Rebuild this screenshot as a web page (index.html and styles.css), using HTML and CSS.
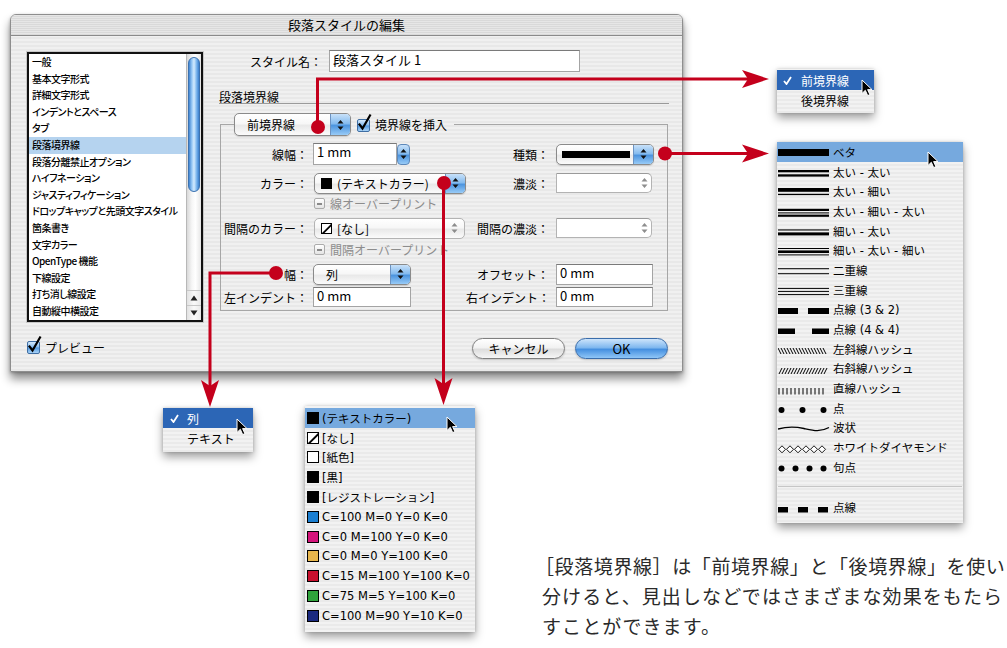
FILE: index.html
```html
<!DOCTYPE html>
<html lang="ja">
<head>
<meta charset="utf-8">
<title>段落スタイルの編集</title>
<link rel="stylesheet" href="styles.css">
</head>
<body>
<div class="canvas">

  <section class="dialog">
    <header class="titlebar">段落スタイルの編集</header>
    <div class="dlg-body">
      <div class="list">
        <ul class="items">
          <li>一般</li>
          <li>基本文字形式</li>
          <li>詳細文字形式</li>
          <li>インデントとスペース</li>
          <li>タブ</li>
          <li class="sel">段落境界線</li>
          <li>段落分離禁止オプション</li>
          <li>ハイフネーション</li>
          <li>ジャスティフィケーション</li>
          <li>ドロップキャップと先頭文字スタイル</li>
          <li>箇条書き</li>
          <li>文字カラー</li>
          <li>OpenType 機能</li>
          <li>下線設定</li>
          <li>打ち消し線設定</li>
          <li>自動縦中横設定</li>
        </ul>
        <div class="scrollbar">
          <div class="track"><div class="thumb"></div></div>
          <div class="sarrow"><svg width="8" height="6" viewBox="0 0 8 6"><path d="M4 0.5L7.5 5.5H0.5Z"/></svg></div>
          <div class="sarrow"><svg width="8" height="6" viewBox="0 0 8 6"><path d="M4 5.5L7.5 0.5H0.5Z"/></svg></div>
        </div>
      </div>

      <div class="form">
        <div class="namerow">
          <span class="namelbl">スタイル名：</span>
          <div class="field namefield">段落スタイル 1</div>
        </div>
        <h2 class="heading">段落境界線</h2>
        <fieldset class="group">
          <legend class="legend">
            <div class="popup pp-rule"><span class="val">前境界線</span><span class="arr"><svg width="7" height="12" viewBox="0 0 7 12"><path d="M3.5 1L6.5 4.6H0.5Z M3.5 11L6.5 7.4H0.5Z"/></svg></span></div>
            <span class="cb"><svg width="16" height="18" viewBox="0 0 16 18"><path d="M2.5 10.5L5.5 14.5L13 1.5"/></svg></span>
            <span class="cbtext">境界線を挿入</span>
          </legend>

          <div class="frow r1">
            <span class="lbl1">線幅：</span>
            <div class="combo">
              <div class="field w84">1 mm</div>
              <div class="stepper"><svg width="7" height="12" viewBox="0 0 7 12"><path d="M3.5 1L6.5 4.6H0.5Z M3.5 11L6.5 7.4H0.5Z"/></svg></div>
            </div>
            <span class="lbl2">種類：</span>
            <div class="popup pp-type"><span class="val"><i class="solidbar"></i></span><span class="arr"><svg width="7" height="12" viewBox="0 0 7 12"><path d="M3.5 1L6.5 4.6H0.5Z M3.5 11L6.5 7.4H0.5Z"/></svg></span></div>
          </div>

          <div class="frow r2">
            <span class="lbl1">カラー：</span>
            <div class="popup pp-color"><span class="val"><i class="sw sw-black"></i>(テキストカラー)</span><span class="arr"><svg width="7" height="12" viewBox="0 0 7 12"><path d="M3.5 1L6.5 4.6H0.5Z M3.5 11L6.5 7.4H0.5Z"/></svg></span></div>
            <span class="lbl2">濃淡：</span>
            <div class="spinfield w96"><svg width="7" height="12" viewBox="0 0 7 12"><path d="M3.5 1L6.5 4.6H0.5Z M3.5 11L6.5 7.4H0.5Z"/></svg></div>
          </div>

          <div class="frow r3">
            <span></span>
            <div class="opt"><span class="cbm"></span><span class="dimtext">線オーバープリント</span></div>
          </div>

          <div class="frow r4">
            <span class="lbl1">間隔のカラー：</span>
            <div class="popup pp-color dis"><span class="val"><svg class="sw-none" width="11" height="11" viewBox="0 0 11 11"><rect x="0.5" y="0.5" width="10" height="10" fill="#fff" stroke="#000"/><path d="M0.5 10.5L10.5 0.5L10.5 3L3 10.5Z" fill="#000"/></svg>[なし]</span><span class="arr"><svg width="7" height="12" viewBox="0 0 7 12"><path d="M3.5 1L6.5 4.6H0.5Z M3.5 11L6.5 7.4H0.5Z"/></svg></span></div>
            <span class="lbl2">間隔の濃淡：</span>
            <div class="spinfield w96"><svg width="7" height="12" viewBox="0 0 7 12"><path d="M3.5 1L6.5 4.6H0.5Z M3.5 11L6.5 7.4H0.5Z"/></svg></div>
          </div>

          <div class="frow r5">
            <span></span>
            <div class="opt"><span class="cbm"></span><span class="dimtext">間隔オーバープリント</span></div>
          </div>

          <div class="frow r6">
            <span class="lbl1">幅：</span>
            <div class="popup pp-width"><span class="val">列</span><span class="arr"><svg width="7" height="12" viewBox="0 0 7 12"><path d="M3.5 1L6.5 4.6H0.5Z M3.5 11L6.5 7.4H0.5Z"/></svg></span></div>
            <span class="lbl2">オフセット：</span>
            <div class="field w97 h21">0 mm</div>
          </div>

          <div class="frow r7">
            <span class="lbl1">左インデント：</span>
            <div class="field w98 h20">0 mm</div>
            <span class="lbl2">右インデント：</span>
            <div class="field w97 h20">0 mm</div>
          </div>
        </fieldset>
      </div>

      <label class="preview"><span class="cb"><svg width="16" height="18" viewBox="0 0 16 18"><path d="M2.5 10.5L5.5 14.5L13 1.5"/></svg></span><span class="pvtext">プレビュー</span></label>
      <div class="buttons">
        <button class="btn">キャンセル</button>
        <button class="btn ok">OK</button>
      </div>
    </div>
  </section>

  <!-- 前境界線 / 後境界線 menu -->
  <div class="menu m-edge">
    <div class="mi hl-dark"><span class="chk"><svg width="9" height="9" viewBox="0 0 9 9"><path d="M1 5L3.5 8L8 1"/></svg></span>前境界線</div>
    <div class="mi"><span class="chk"></span>後境界線</div>
    <svg class="cursor c-edge" width="12" height="18" viewBox="0 0 12 18"><path d="M1 1L1 14.5L4.3 11.3L6.7 16.6L8.9 15.6L6.6 10.6L11 10.6Z"/></svg>
  </div>

  <!-- 種類 menu -->
  <div class="menu m-type">
    <div class="ti hl-light"><svg class="smp" width="52" height="20" viewBox="0 0 52 20"><rect x="0" y="7" width="51" height="7"/></svg>ベタ</div>
    <div class="ti"><svg class="smp" width="52" height="20" viewBox="0 0 52 20"><rect x="0" y="8" width="51" height="2.3"/><rect x="0" y="12.3" width="51" height="2.3"/></svg>太い - 太い</div>
    <div class="ti"><svg class="smp" width="52" height="20" viewBox="0 0 52 20"><rect x="0" y="7" width="51" height="3.8"/><rect x="0" y="12.8" width="51" height="1.3"/></svg>太い - 細い</div>
    <div class="ti"><svg class="smp" width="52" height="20" viewBox="0 0 52 20"><rect x="0" y="7.8" width="51" height="2.2"/><rect x="0" y="11.4" width="51" height="1"/><rect x="0" y="13.6" width="51" height="2.2"/></svg>太い - 細い - 太い</div>
    <div class="ti"><svg class="smp" width="52" height="20" viewBox="0 0 52 20"><rect x="0" y="8.4" width="51" height="1.1"/><rect x="0" y="11.4" width="51" height="3"/></svg>細い - 太い</div>
    <div class="ti"><svg class="smp" width="52" height="20" viewBox="0 0 52 20"><rect x="0" y="8" width="51" height="1"/><rect x="0" y="10.4" width="51" height="2.6"/><rect x="0" y="14.4" width="51" height="1"/></svg>細い - 太い - 細い</div>
    <div class="ti"><svg class="smp" width="52" height="20" viewBox="0 0 52 20"><rect x="0" y="8.2" width="51" height="1"/><rect x="0" y="13.2" width="51" height="1"/></svg>二重線</div>
    <div class="ti"><svg class="smp" width="52" height="20" viewBox="0 0 52 20"><rect x="0" y="7.9" width="51" height="1"/><rect x="0" y="10.9" width="51" height="1"/><rect x="0" y="14.1" width="51" height="1"/></svg>三重線</div>
    <div class="ti"><svg class="smp" width="52" height="20" viewBox="0 0 52 20"><rect x="0" y="9" width="20" height="6"/><rect x="30" y="9" width="21" height="6"/></svg>点線 (3 &amp; 2)</div>
    <div class="ti"><svg class="smp" width="52" height="20" viewBox="0 0 52 20"><rect x="0" y="9.5" width="17" height="5.5"/><rect x="34" y="9.5" width="17" height="5.5"/></svg>点線 (4 &amp; 4)</div>
    <div class="ti"><svg class="smp" width="52" height="20" viewBox="0 0 52 20"><path class="hatch" d="M0 9l3 6M3 9l3 6M6 9l3 6M9 9l3 6M12 9l3 6M15 9l3 6M18 9l3 6M21 9l3 6M24 9l3 6M27 9l3 6M30 9l3 6M33 9l3 6M36 9l3 6M39 9l3 6M42 9l3 6M45 9l3 6"/></svg>左斜線ハッシュ</div>
    <div class="ti"><svg class="smp" width="52" height="20" viewBox="0 0 52 20"><path class="hatch" d="M4 10l-3 6M7 10l-3 6M10 10l-3 6M13 10l-3 6M16 10l-3 6M19 10l-3 6M22 10l-3 6M25 10l-3 6M28 10l-3 6M31 10l-3 6M34 10l-3 6M37 10l-3 6M40 10l-3 6M43 10l-3 6M46 10l-3 6M49 10l-3 6"/></svg>右斜線ハッシュ</div>
    <div class="ti"><svg class="smp" width="52" height="20" viewBox="0 0 52 20"><path class="hatch" d="M1 10v6.5M5 10v6.5M9 10v6.5M13 10v6.5M17 10v6.5M21 10v6.5M25 10v6.5M29 10v6.5M33 10v6.5M37 10v6.5M41 10v6.5M45 10v6.5"/></svg>直線ハッシュ</div>
    <div class="ti"><svg class="smp" width="52" height="20" viewBox="0 0 52 20"><circle cx="3.5" cy="12" r="3"/><circle cx="24.5" cy="12" r="3"/><circle cx="45.5" cy="12" r="3"/></svg>点</div>
    <div class="ti"><svg class="smp" width="52" height="20" viewBox="0 0 52 20"><path class="wave" d="M0 12C9 9.5 17 9.5 26 11.5S42 15.5 51 10.5"/></svg>波状</div>
    <div class="ti"><svg class="smp" width="52" height="20" viewBox="0 0 52 20"><path class="dia" d="M0.5 12.3l3.5-3.5 3.5 3.5-3.5 3.5z M8.5 12.3l3.5-3.5 3.5 3.5-3.5 3.5z M16.5 12.3l3.5-3.5 3.5 3.5-3.5 3.5z M24.5 12.3l3.5-3.5 3.5 3.5-3.5 3.5z M32.5 12.3l3.5-3.5 3.5 3.5-3.5 3.5z M40.5 12.3l3.5-3.5 3.5 3.5-3.5 3.5z"/></svg>ホワイトダイヤモンド</div>
    <div class="ti"><svg class="smp" width="52" height="20" viewBox="0 0 52 20"><circle cx="3.5" cy="11.5" r="3"/><circle cx="17.5" cy="11.5" r="3"/><circle cx="31.5" cy="11.5" r="3"/><circle cx="45.5" cy="11.5" r="3"/></svg>句点</div>
    <div class="msep"></div>
    <div class="ti"><svg class="smp" width="52" height="20" viewBox="0 0 52 20"><rect x="0" y="10" width="10" height="5.5"/><rect x="20" y="10" width="10" height="5.5"/><rect x="40" y="10" width="10" height="5.5"/></svg>点線</div>
    <svg class="cursor c-type" width="12" height="18" viewBox="0 0 12 18"><path d="M1 1L1 14.5L4.3 11.3L6.7 16.6L8.9 15.6L6.6 10.6L11 10.6Z"/></svg>
  </div>

  <!-- 列 / テキスト menu -->
  <div class="menu m-width">
    <div class="mi hl-dark"><span class="chk"><svg width="9" height="9" viewBox="0 0 9 9"><path d="M1 5L3.5 8L8 1"/></svg></span>列</div>
    <div class="mi"><span class="chk"></span>テキスト</div>
    <svg class="cursor c-width" width="12" height="18" viewBox="0 0 12 18"><path d="M1 1L1 14.5L4.3 11.3L6.7 16.6L8.9 15.6L6.6 10.6L11 10.6Z"/></svg>
  </div>

  <!-- カラー menu -->
  <div class="menu m-color">
    <div class="ci hl-light"><i class="sw sw-black"></i>(テキストカラー)</div>
    <div class="ci"><svg class="sw-none" width="12" height="12" viewBox="0 0 12 12"><rect x="0.5" y="0.5" width="11" height="11" fill="#fff" stroke="#000"/><path d="M0.5 11.5L11.5 0.5L11.5 3.2L3.2 11.5Z" fill="#000"/></svg>[なし]</div>
    <div class="ci"><i class="sw sw-paper"></i>[紙色]</div>
    <div class="ci"><i class="sw sw-black"></i>[黒]</div>
    <div class="ci"><i class="sw sw-black"></i>[レジストレーション]</div>
    <div class="ci"><i class="sw sw-c"></i>C=100 M=0 Y=0 K=0</div>
    <div class="ci"><i class="sw sw-m"></i>C=0 M=100 Y=0 K=0</div>
    <div class="ci"><i class="sw sw-y"></i>C=0 M=0 Y=100 K=0</div>
    <div class="ci"><i class="sw sw-r"></i>C=15 M=100 Y=100 K=0</div>
    <div class="ci"><i class="sw sw-g"></i>C=75 M=5 Y=100 K=0</div>
    <div class="ci"><i class="sw sw-b"></i>C=100 M=90 Y=10 K=0</div>
    <svg class="cursor c-color" width="12" height="18" viewBox="0 0 12 18"><path d="M1 1L1 14.5L4.3 11.3L6.7 16.6L8.9 15.6L6.6 10.6L11 10.6Z"/></svg>
  </div>

  <!-- red connectors -->
  <svg class="wires" width="1007" height="648" viewBox="0 0 1007 648">
    <g fill="none" stroke="#c4001c" stroke-width="3">
      <path d="M317.5 127V79H748"/>
      <path d="M665 153.5H748"/>
      <path d="M276 273H210V386"/>
      <path d="M443.5 183V384"/>
    </g>
    <g fill="#c4001c">
      <circle cx="318" cy="127" r="7"/>
      <circle cx="665" cy="153.5" r="7"/>
      <circle cx="276" cy="273" r="7"/>
      <circle cx="444" cy="183" r="7"/>
      <path d="M769 79L742 70L748 79L742 88Z"/>
      <path d="M769 153.5L742 144.5L748 153.5L742 162.5Z"/>
      <path d="M210 407L201 380L210 386L219 380Z"/>
      <path d="M443.5 405L434.5 378L443.5 384L452.5 378Z"/>
    </g>
  </svg>

  <p class="caption"><span class="l1">［段落境界線］は「前境界線」と「後境界線」を使い</span><span class="l2">分けると、見出しなどではさまざまな効果をもたら</span><span class="l2">すことができます。</span></p>
</div>
</body>
</html>
```

FILE: styles.css
```css
* { box-sizing: border-box; }
html, body { margin: 0; padding: 0; background: #fff; }
body {
  font-family: "Noto Sans CJK JP", "Noto Sans", sans-serif;
  font-size: 12px;
  color: #000;
}
.canvas { position: relative; width: 1007px; height: 648px; overflow: hidden; background: #fff; }

/* ---------- dialog window ---------- */
.dialog {
  position: absolute; left: 10px; top: 14px;
  width: 673px; height: 358px;
  border: 1px solid #8e8e8e;
  border-radius: 6px 6px 0 0;
  background: repeating-linear-gradient(#f0f0f0 0 2px, #e8e8e8 2px 4px);
  box-shadow: 0 7px 10px rgba(0,0,0,.45), 0 1px 3px rgba(0,0,0,.25);
}
.titlebar {
  height: 21px;
  border-bottom: 1px solid #8a8a8a;
  border-radius: 5px 5px 0 0;
  background: repeating-linear-gradient(#e6e6e6 0 1px, #d9d9d9 1px 2px);
  text-align: center;
  font-size: 13px;
  line-height: 20px;
}
.dlg-body {
  display: grid;
  grid-template-columns: 176px 450px;
  grid-template-rows: 272px 22px;
  column-gap: 16px;
  row-gap: 16px;
  padding: 14px 0 0 16px;
}

/* ---------- category list ---------- */
.list {
  margin-top: 2px; height: 270px;
  display: flex;
  border: 2px solid #111;
  background: #fff;
  box-shadow: 0 0 0 1px #c8c8c8;
}
.items {
  list-style: none; margin: 0; padding: 0;
  flex: 1; overflow: hidden;
  font-size: 10px; line-height: 16.6px; font-weight: 500;
  letter-spacing: -0.5px;
  font-feature-settings: "palt";
}
.items li { padding-left: 3px; white-space: nowrap; }
.items li.sel { background: #b5d3ef; }
.scrollbar {
  width: 15px; display: flex; flex-direction: column;
  border-left: 1px solid #b8b8b8;
}
.track {
  flex: 1; padding: 3px 1px 0 1px;
  background: linear-gradient(90deg, #d9d9d9, #f6f6f6 35%, #ffffff 60%, #e6e6e6);
}
.thumb {
  height: 135px; border-radius: 6px;
  border: 1px solid #3c72b0;
  background: linear-gradient(90deg, #3f84d2, #9ccbf6 30%, #d4ebfe 50%, #7cb6ee 75%, #3a7fcd);
}
.sarrow {
  height: 15px; display: flex; align-items: center; justify-content: center;
  border-top: 1px solid #c8c8c8;
  background: linear-gradient(90deg, #e2e2e2, #fafafa 50%, #e8e8e8);
}
.sarrow svg { fill: #222; }

/* ---------- form ---------- */
.namerow { display: flex; align-items: center; height: 22px; }
.namelbl { width: 110px; text-align: right; padding-right: 7px; font-size: 12px; }
.field {
  height: 22px;
  background: #fff;
  border: 1px solid #a4a4a4;
  border-top-color: #7a7a7a;
  font-size: 13px; line-height: 14px;
  padding: 1px 3px 0;
  white-space: nowrap;
}
.namefield { width: 251px; padding-top: 2px; }
.w84 { width: 84px; }
.w96 { width: 96px; }
.w97 { width: 97px; }
.w98 { width: 98px; }
.h21 { height: 21px; }
.h20 { height: 20px; }

.heading {
  margin: 19px 0 0; padding: 0;
  font-size: 12px; font-weight: normal; line-height: 12px;
  border-bottom: 1px solid #9a9a9a;
}
.group {
  margin: 9px 0 0 1px; padding: 0 0 3px 0;
  width: 448px; min-width: 0;
  border: 1px solid #a6a6a6;
}
.legend {
  margin-left: 13px; padding: 0 7px 0 0;
  display: flex; align-items: center;
  height: 23px;
}
.frow {
  display: grid;
  grid-template-columns: 92px 153px 90px 98px;
  align-items: center;
}
.r1 { height: 22px; margin-top: 7px; }
.r2 { height: 22px; margin-top: 7px; }
.r3 { height: 12px; margin-top: 1px; }
.r4 { height: 22px; margin-top: 10px; }
.r5 { height: 14px; margin-top: 2px; }
.r6 { height: 22px; margin-top: 8px; }
.r7 { height: 20px; margin-top: 2px; }
.lbl1 { text-align: right; padding-right: 5px; white-space: nowrap; }
.lbl2 { text-align: right; padding-right: 7px; white-space: nowrap; }
.combo { display: flex; align-items: center; }

/* aqua popup button */
.popup {
  display: flex; height: 21px;
  border: 1px solid #8a8a8a;
  border-radius: 5px;
  background: linear-gradient(#ffffff, #f7f7f7 45%, #e9e9e9 55%, #fbfbfb);
  box-shadow: 0 1px 1px rgba(0,0,0,.14);
  overflow: hidden;
}
.popup .val {
  flex: 1; display: flex; align-items: center;
  padding-left: 12px; white-space: nowrap; font-size: 12px;
}
.popup .arr {
  width: 20px; display: flex; align-items: center; justify-content: center;
  border-left: 1px solid #6c93c2;
  background: linear-gradient(#c8e1f9, #86bcef 45%, #4d95df 55%, #98cbf7);
}
.popup .arr svg, .stepper svg { fill: #111; }
.pp-rule { width: 117px; height: 23px; }
.pp-type { width: 98px; }
.pp-type .val { padding-left: 5px; }
.solidbar { display: block; width: 68px; height: 7px; background: #000; }
.pp-color { width: 152px; margin-left: 1px; }
.pp-color .val { padding-left: 6px; }
.pp-color .val .sw, .pp-color .val .sw-none { margin-right: 5px; }
.pp-width { width: 98px; }
.popup.dis { width: 151px; border-color: #b3b3b3; box-shadow: none; }
.popup.dis .arr { background: none; border-left: 0; }
.popup.dis .arr svg { fill: #8c8c8c; }

.stepper {
  width: 13px; height: 21px; margin-left: 0;
  border: 1px solid #5d88ba; border-radius: 4px;
  display: flex; align-items: center; justify-content: center;
  background: linear-gradient(#c8e1f9, #86bcef 45%, #4d95df 55%, #98cbf7);
}
.spinfield {
  height: 20px; background: #fff;
  border: 1px solid #b3b3b3; border-top-color: #9a9a9a;
  border-radius: 0 5px 5px 0;
  display: flex; align-items: center; justify-content: flex-end;
  padding-right: 3px;
}
.spinfield svg { fill: #8e8e8e; }

/* checkboxes */
.cb {
  position: relative; display: inline-block;
  width: 13px; height: 13px; flex: none;
  border: 1px solid #3f6ea3; border-radius: 2px;
  background: linear-gradient(#d4e8fb, #86bcef 48%, #5198e0 52%, #a9d3f8);
}
.cb svg {
  position: absolute; left: -1px; top: -6px; overflow: visible;
  fill: none; stroke: #000; stroke-width: 2.2; stroke-linecap: square;
}
.legend .cb { margin-left: 6px; margin-top: 1px; }
.cbtext { margin-left: 5px; font-size: 12px; white-space: nowrap; }
.opt { display: flex; align-items: center; margin-left: 1px; }
.cbm {
  width: 11px; height: 11px; flex: none;
  border: 1px solid #ababab; border-radius: 2px;
  background: linear-gradient(#ffffff, #e4e4e4);
  display: flex; align-items: center; justify-content: center;
}
.cbm::after { content: ""; width: 5px; height: 2px; background: #8a8a8a; }
.dimtext { margin-left: 5px; color: #8d8d8d; white-space: nowrap; }

/* bottom row */
.preview { display: flex; align-items: center; align-self: center; margin-top: -4px; }
.pvtext { margin-left: 5px; font-size: 12px; }
.buttons { display: flex; justify-content: flex-end; gap: 10px; padding-right: 1px; }
.btn {
  width: 93px; height: 21px; padding: 0;
  border: 1px solid #7f7f7f; border-radius: 11px;
  background: linear-gradient(#ffffff, #f2f2f2 45%, #dddddd 55%, #f6f6f6);
  font-family: "Noto Sans CJK JP", "Noto Sans", sans-serif;
  font-size: 12px; line-height: 19px; color: #000;
  box-shadow: 0 1px 2px rgba(0,0,0,.2);
}
.btn.ok {
  border-color: #3a6dab;
  background: linear-gradient(#cde4fb, #80b8ef 45%, #4690e0 55%, #8fc6f7);
  font-size: 13px;
}

/* ---------- pop-up menus ---------- */
.menu {
  position: absolute;
  background: repeating-linear-gradient(#f2f2f2 0 2px, #eaeaea 2px 4px);
  box-shadow: 0 5px 9px rgba(0,0,0,.38), 0 0 3px rgba(0,0,0,.18);
  font-size: 12px;
}
.hl-dark { background: #2c66b6; color: #fff; }
.hl-light { background: #76a9de; }
.mi { display: flex; align-items: center; height: 20px; white-space: nowrap; }
.chk { width: 18px; display: flex; align-items: center; }
.chk svg { fill: none; stroke: #fff; stroke-width: 1.8; }
.m-edge { left: 777px; top: 69px; width: 97px; height: 44px; padding-top: 1px; }
.m-edge .mi { padding-left: 6px; }
.m-width { left: 163px; top: 408px; width: 90px; height: 44px; }
.m-width .mi { padding-left: 7px; }
.m-width .chk { width: 17px; }

.m-type, .m-color {
  font-family: "DejaVu Sans", "Noto Sans CJK JP", sans-serif;
  font-size: 11.5px;
}
.m-type { left: 777px; top: 142px; width: 186px; height: 381px; }
.ti { display: flex; align-items: center; height: 19.7px; white-space: nowrap; }
.smp { flex: none; margin-left: 1px; margin-right: 3px; fill: #000; }
.hatch { stroke: #000; stroke-width: 1; fill: none; }
.wave { stroke: #000; stroke-width: 1.4; fill: none; }
.dia { fill: #fff; stroke: #000; stroke-width: 0.9; }
.msep { height: 20px; display: flex; align-items: center; padding: 0 1px; }
.msep::after { content: ""; flex: 1; height: 1px; background: #c6c6c6; }

.m-color { left: 305px; top: 406px; width: 170px; height: 226px; padding-top: 2px; }
.ci { display: flex; align-items: center; height: 19.8px; padding-left: 2px; white-space: nowrap; }
.ci .sw, .ci .sw-none { margin-right: 3px; }

.sw { display: inline-block; flex: none; width: 12px; height: 12px; border: 1px solid #000; }
.pp-color .sw { width: 11px; height: 11px; }
.sw-none { flex: none; display: block; }
.sw-black { background: #000; }
.sw-paper { background: #fff; }
.sw-c { background: #1b7fd1; }
.sw-m { background: #d4147b; }
.sw-y { background: #e7b64c; }
.sw-r { background: #c8102e; }
.sw-g { background: #2fa33b; }
.sw-b { background: #1b2a80; }

.cursor { position: absolute; fill: #000; stroke: #fff; stroke-width: 1; }
.c-edge { left: 84px; top: 10px; }
.c-type { left: 150px; top: 9px; }
.c-width { left: 73px; top: 10px; }
.c-color { left: 141px; top: 10px; }

/* ---------- connectors & caption ---------- */
.wires { position: absolute; left: 0; top: 0; pointer-events: none; }
.caption {
  position: absolute; left: 542px; top: 551px; margin: 0;
  font-size: 19px; line-height: 30px; color: #2a2a2a;
}
.caption span { display: block; white-space: nowrap; letter-spacing: 1.1px; }
.caption .l1 { margin-left: -7px; letter-spacing: 0.6px; }
```
